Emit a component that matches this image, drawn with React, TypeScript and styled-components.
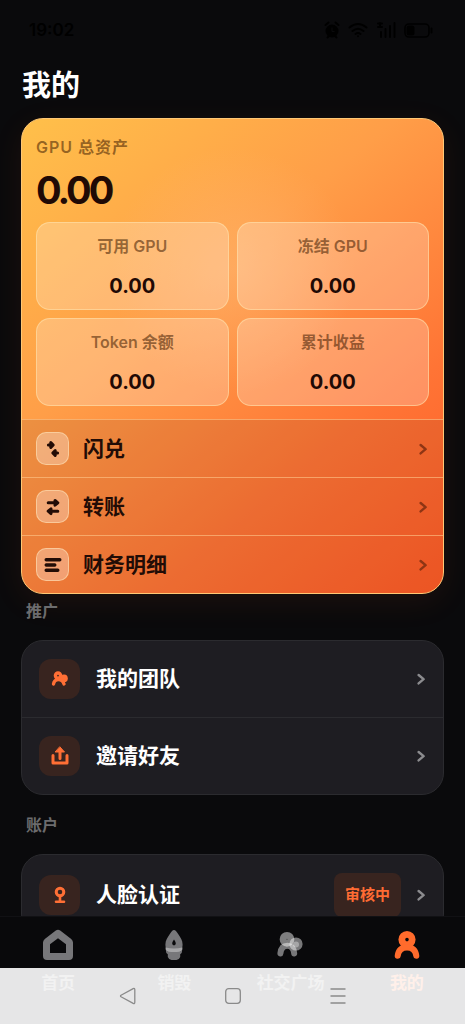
import React from "react";
import styled, { createGlobalStyle } from "styled-components";

const GlobalStyle = createGlobalStyle`
  *, *::before, *::after { box-sizing: border-box; }
  body {
    margin: 0;
    background: #0a0a0c;
    font-family: Inter, "Noto Sans CJK SC", sans-serif;
  }
  h1, h2, p, dl, dt, dd, ul { margin: 0; padding: 0; }
  ul { list-style: none; }
  a { color: inherit; text-decoration: none; }
`;

const Screen = styled.div`
  position: relative;
  display: flex;
  flex-direction: column;
  height: 100vh;
  overflow: hidden;
  color: #fff;
  background: #0a0a0c;
`;

const StatusBar = styled.div`
  display: flex;
  align-items: center;
  justify-content: space-between;
  height: 60px;
  flex: none;
  padding: 0 32px 0 29px;
  color: #000;
  font-size: 17px;
  font-weight: 600;
`;

const StatusIcons = styled.div`
  display: flex;
  align-items: center;
  gap: 8px;
`;

const Content = styled.main`
  flex: 1;
  min-height: 0;
  overflow-y: auto;
  scrollbar-width: none;
  padding: 6px 21px 24px;
`;

const PageTitle = styled.h1`
  padding: 0 1px;
  font-size: 29px;
  line-height: 40px;
  font-weight: 700;
  margin-bottom: 12px;
`;

const AssetCard = styled.section`
  border: 1px solid #ffc875;
  border-radius: 22px;
  overflow: hidden;
  color: #1f0a05;
  background:
    radial-gradient(circle at 50% 32%, rgba(255, 190, 130, 0.4), rgba(255, 170, 100, 0) 32%),
    linear-gradient(140deg, #ffc04a 0%, #ff9e48 38%, #ff7435 72%, #ff5a26 100%);
  box-shadow: 0 8px 32px rgba(255, 107, 44, 0.08);
`;

const AssetSummary = styled.div`
  padding: 17px 14px 13px;
`;

const TotalLabel = styled.h2`
  font-size: 16px;
  line-height: 22px;
  font-weight: 600;
  letter-spacing: 1px;
  color: rgba(60, 25, 0, 0.55);
`;

const TotalValue = styled.p`
  margin: 9px 0;
  font-size: 38px;
  line-height: 46px;
  font-weight: 700;
  letter-spacing: -3px;
`;

const StatGrid = styled.dl`
  display: grid;
  grid-template-columns: 1fr 1fr;
  gap: 8px;
`;

const Stat = styled.div`
  display: flex;
  flex-direction: column;
  align-items: center;
  gap: 16px;
  height: 88px;
  padding-top: 12px;
  border: 1px solid rgba(255, 225, 170, 0.6);
  border-radius: 14px;
  background: rgba(255, 255, 255, 0.23);

  dt {
    font-size: 16px;
    line-height: 22px;
    font-weight: 600;
    color: rgba(60, 25, 0, 0.55);
  }
  dd {
    font-size: 20px;
    line-height: 26px;
    font-weight: 700;
  }
`;

const ActionLink = styled.a`
  display: flex;
  align-items: center;
  gap: 14px;
  height: 58px;
  padding: 0 16px 0 14px;
  border-top: 1px solid rgba(255, 200, 140, 0.6);
  background: rgba(110, 50, 20, 0.13);
  font-size: 21px;
  line-height: 30px;
  font-weight: 700;
  color: #220c06;
`;

const ActionIcon = styled.span`
  display: grid;
  place-items: center;
  width: 33px;
  height: 33px;
  border: 1px solid rgba(255, 225, 180, 0.6);
  border-radius: 10px;
  background: rgba(255, 255, 255, 0.3);
`;

const RowText = styled.span`
  flex: 1;
`;

const SectionTitle = styled.h2<{ $spaced?: boolean }>`
  margin: ${(p) => (p.$spaced ? "18px" : "5px")} 5px 17px;
  font-size: 16px;
  line-height: 24px;
  font-weight: 600;
  color: #6c6c6e;
`;

const MenuCard = styled.ul`
  overflow: hidden;
  border: 1px solid #2b2b2f;
  border-radius: 22px;
  background: #1e1d22;

  li + li { border-top: 1px solid #2b2b2f; }
`;

const MenuLink = styled.a`
  display: flex;
  align-items: center;
  gap: 16px;
  padding: 18px 18px 18px 17px;
  font-size: 21px;
  line-height: 32px;
  font-weight: 700;
`;

const MenuIcon = styled.span`
  display: grid;
  place-items: center;
  width: 41px;
  height: 40px;
  border-radius: 12px;
  color: #ff6f35;
  background: #38241f;
`;

const Badge = styled.span`
  padding: 0 11px;
  border-radius: 8px;
  color: #ff6b33;
  background: #38241f;
  font-size: 15px;
  line-height: 44px;
  font-weight: 700;
`;

const TabBar = styled.nav`
  display: flex;
  flex: none;
  height: 108px;
  border-top: 1px solid #111114;
  background: #09090b;
`;

const Tab = styled.a<{ $active?: boolean }>`
  flex: 1;
  display: flex;
  flex-direction: column;
  align-items: center;
  gap: 10px;
  padding-top: 12px;
  font-size: 17px;
  line-height: 24px;
  font-weight: 700;
  color: ${(p) => (p.$active ? "#ff6b2c" : "#77777a")};
`;

const SystemNav = styled.div`
  position: absolute;
  left: 0;
  right: 0;
  bottom: 0;
  display: flex;
  align-items: center;
  justify-content: center;
  gap: 87px;
  height: 56px;
  background: rgba(255, 255, 255, 0.9);
`;

const SystemButton = styled.button`
  display: flex;
  padding: 0;
  border: 0;
  color: #8a8a8a;
  background: none;
`;

const Chevron = ({ color }: { color: string }) => (
  <svg width="8" height="12" viewBox="0 0 8 12" fill="none" stroke={color} strokeWidth="2.4" strokeLinecap="round" strokeLinejoin="round" aria-hidden="true">
    <path d="M1.6 2 L6.6 6.2 L1.6 10.4" />
  </svg>
);

const SwapIcon = () => (
  <svg width="18" height="18" viewBox="0 0 18 18" fill="currentColor" stroke="currentColor" strokeWidth="3" strokeLinecap="round" strokeLinejoin="round" aria-hidden="true">
    <path d="M4.4 5H7M6.8 2.6 L9.2 5 L6.8 7.4ZM13.6 13H11M11.2 10.6 L8.8 13 L11.2 15.4Z" />
  </svg>
);

const TransferIcon = () => (
  <svg width="18" height="18" viewBox="0 0 18 18" fill="currentColor" stroke="currentColor" strokeWidth="3" strokeLinecap="round" strokeLinejoin="round" aria-hidden="true">
    <path d="M4.2 4.8H12M11 2.4 L13.8 4.8 L11 7.2ZM13.8 13.2H6M7 10.8 L4.2 13.2 L7 15.6Z" />
  </svg>
);

const LinesIcon = () => (
  <svg width="18" height="18" viewBox="0 0 18 18" fill="none" stroke="currentColor" strokeWidth="3.4" strokeLinecap="round" aria-hidden="true">
    <path d="M2.2 3.8H15.8M2.2 9H10.8M2.2 14.2H13.8" />
  </svg>
);

const TeamIcon = () => (
  <svg width="18" height="18" viewBox="0 0 18 18" fill="none" stroke="currentColor" strokeLinecap="round" aria-hidden="true">
    <circle cx="7" cy="5.6" r="2.6" strokeWidth="3.4" />
    <circle cx="13" cy="8.4" r="3.8" fill="currentColor" stroke="none" />
    <path d="M2.5 14C3 10.8 5 9.6 7.5 9.6S11.8 10.6 13 14" strokeWidth="3.4" />
  </svg>
);

const ShareIcon = () => (
  <svg width="18" height="20" viewBox="0 0 18 20" fill="none" stroke="currentColor" strokeWidth="3" strokeLinecap="round" strokeLinejoin="round" aria-hidden="true">
    <path d="M2 9.5V17H16V9.5M9 12.5V3.5" />
    <path d="M9 1 L13.5 6H4.5Z" fill="currentColor" strokeWidth="1" />
  </svg>
);

const FaceIcon = () => (
  <svg width="18" height="18" viewBox="0 0 18 18" fill="none" stroke="currentColor" strokeLinecap="round" aria-hidden="true">
    <circle cx="9" cy="6" r="3.8" strokeWidth="3" />
    <path d="M9 10V15M5 15.8H13" strokeWidth="2.6" />
  </svg>
);

const HomeTabIcon = () => (
  <svg width="32" height="32" viewBox="0 0 32 32" aria-hidden="true">
    <path fill="currentColor" fillRule="evenodd" d="M13.8 1.6Q16 0 18.2 1.6L29.2 10Q31 11.5 31 13.6V27Q31 31 27 31H5Q1 31 1 27V13.6Q1 11.5 2.8 10ZM16 9.3L8 15.3V24H24V15.3Z" />
  </svg>
);

const BurnTabIcon = () => (
  <svg width="32" height="32" viewBox="0 0 32 32" aria-hidden="true">
    <path fill="currentColor" fillRule="evenodd" d="M16 1C17.4 1 18.5 2.4 20 4.8C22.5 8.4 24.6 11.5 24.6 15.5C24.6 18 24 20 22.5 22H9.5C8 20 7.4 18 7.4 15.5C7.4 11.5 9.5 8.4 12 4.8C13.5 2.4 14.6 1 16 1ZM16 10.5C14.8 12.2 14.2 13.3 14.2 14.6A1.8 1.8 0 0 0 17.8 14.6C17.8 13.3 17.2 12.2 16 10.5Z" />
    <path fill="#a5a5a7" d="M7.6 18.6Q16 20.4 24.4 18.6Q24.8 22.4 21.6 23H10.4Q7.2 22.4 7.6 18.6Z" />
    <path fill="currentColor" d="M7.8 21.5Q10 23 16 23T24.2 21.5Q24 24.8 22.2 25.3V28Q21 31 18.5 31H13.5Q11 31 9.8 28V25.3Q8 24.8 7.8 21.5Z" />
  </svg>
);

const CommunityTabIcon = () => (
  <svg width="32" height="32" viewBox="0 0 32 32" fill="none" stroke="#fff" aria-hidden="true">
    <circle cx="12" cy="10.3" r="3.9" strokeWidth="6.9" opacity="0.48" />
    <circle cx="21" cy="15" r="6.6" fill="#fff" stroke="none" opacity="0.45" />
    <circle cx="21" cy="15.6" r="3" fill="#fff" stroke="none" opacity="0.35" />
    <path d="M5.4 24.4C6 19 8.6 16.8 12.4 16.8S18.6 19 19.2 24.4" strokeWidth="6" strokeLinecap="round" opacity="0.45" />
  </svg>
);

const ProfileTabIcon = () => (
  <svg width="32" height="32" viewBox="0 0 32 32" fill="none" stroke="currentColor" aria-hidden="true">
    <circle cx="16" cy="10.6" r="5.2" strokeWidth="6.8" />
    <path d="M6.7 26.8C7.4 20.6 11 18.4 16 18.4S24.6 20.6 25.3 26.8" strokeWidth="6" strokeLinecap="round" />
  </svg>
);

const AlarmIcon = () => (
  <svg width="16" height="18" viewBox="0 0 16 18" aria-hidden="true">
    <circle cx="8" cy="10" r="6.5" fill="currentColor" />
    <path d="M1.5 4 L4.5 1.5M14.5 4 L11.5 1.5M3.5 16.5 L5 15M12.5 16.5 L11 15" stroke="currentColor" strokeWidth="2" strokeLinecap="round" />
    <path d="M8 6.5V10.5H10.5" stroke="#0a0a0c" fill="none" />
  </svg>
);

const WifiIcon = () => (
  <svg width="20" height="16" viewBox="0 0 20 16" fill="none" stroke="currentColor" strokeWidth="2" strokeLinecap="round" aria-hidden="true">
    <path d="M1.5 5.5Q10 -1.5 18.5 5.5M4.5 9Q10 4.5 15.5 9M7.5 12Q10 10 12.5 12M10 14.2V14.3" />
  </svg>
);

const SignalIcon = () => (
  <svg width="20" height="18" viewBox="0 0 20 18" fill="none" stroke="currentColor" strokeWidth="2" strokeLinecap="round" aria-hidden="true">
    <path d="M2 2.5H6M2 6H6M4 2V6M5 16V11M9.5 16V8M14 16V5M18.5 16V2" />
  </svg>
);

const BatteryIcon = () => (
  <svg width="29" height="15" viewBox="0 0 29 15" aria-hidden="true">
    <rect x="1" y="1" width="24" height="13" rx="4" fill="none" stroke="currentColor" strokeWidth="1.6" />
    <rect x="2.5" y="2.5" width="8" height="10" rx="2.5" fill="currentColor" />
    <path d="M27.5 5.5V9.5" stroke="currentColor" strokeWidth="2" strokeLinecap="round" />
  </svg>
);

const stats = [
  { label: "可用 GPU", value: "0.00" },
  { label: "冻结 GPU", value: "0.00" },
  { label: "Token 余额", value: "0.00" },
  { label: "累计收益", value: "0.00" },
];

const actions = [
  { label: "闪兑", icon: <SwapIcon /> },
  { label: "转账", icon: <TransferIcon /> },
  { label: "财务明细", icon: <LinesIcon /> },
];

const tabs = [
  { label: "首页", icon: <HomeTabIcon /> },
  { label: "销毁", icon: <BurnTabIcon /> },
  { label: "社交广场", icon: <CommunityTabIcon /> },
  { label: "我的", icon: <ProfileTabIcon />, active: true },
];

type MenuRowProps = { label: string; icon: React.ReactNode; badge?: string };

const MenuRow = ({ label, icon, badge }: MenuRowProps) => (
  <li>
    <MenuLink href="#">
      <MenuIcon>{icon}</MenuIcon>
      <RowText>{label}</RowText>
      {badge && <Badge>{badge}</Badge>}
      <Chevron color="#8b8b8e" />
    </MenuLink>
  </li>
);

export default function App() {
  return (
    <Screen>
      <GlobalStyle />
      <StatusBar>
        <span>19:02</span>
        <StatusIcons>
          <AlarmIcon />
          <WifiIcon />
          <SignalIcon />
          <BatteryIcon />
        </StatusIcons>
      </StatusBar>

      <Content>
        <PageTitle>我的</PageTitle>

        <AssetCard>
          <AssetSummary>
            <TotalLabel>GPU 总资产</TotalLabel>
            <TotalValue>0.00</TotalValue>
            <StatGrid>
              {stats.map((s) => (
                <Stat key={s.label}>
                  <dt>{s.label}</dt>
                  <dd>{s.value}</dd>
                </Stat>
              ))}
            </StatGrid>
          </AssetSummary>
          {actions.map((a) => (
            <ActionLink key={a.label} href="#">
              <ActionIcon>{a.icon}</ActionIcon>
              <RowText>{a.label}</RowText>
              <Chevron color="#8e3514" />
            </ActionLink>
          ))}
        </AssetCard>

        <SectionTitle>推广</SectionTitle>
        <MenuCard>
          <MenuRow label="我的团队" icon={<TeamIcon />} />
          <MenuRow label="邀请好友" icon={<ShareIcon />} />
        </MenuCard>

        <SectionTitle $spaced>账户</SectionTitle>
        <MenuCard>
          <MenuRow label="人脸认证" icon={<FaceIcon />} badge="审核中" />
        </MenuCard>
      </Content>

      <TabBar>
        {tabs.map((t) => (
          <Tab key={t.label} href="#" $active={t.active}>
            {t.icon}
            {t.label}
          </Tab>
        ))}
      </TabBar>

      <SystemNav>
        <SystemButton type="button" aria-label="返回">
          <svg width="18" height="18" viewBox="0 0 18 18" fill="none" stroke="currentColor" strokeWidth="1.3" strokeLinejoin="round">
            <path d="M2 8.2 L14.2 1.6Q15.8 1 15.8 2.8V15.2Q15.8 17 14.2 16.4L2 9.8Q1 9 2 8.2Z" />
          </svg>
        </SystemButton>
        <SystemButton type="button" aria-label="主屏幕">
          <svg width="18" height="18" viewBox="0 0 18 18" fill="none" stroke="currentColor" strokeWidth="1.3">
            <rect x="1.7" y="1.7" width="14.6" height="14.6" rx="3" />
          </svg>
        </SystemButton>
        <SystemButton type="button" aria-label="最近任务">
          <svg width="18" height="18" viewBox="0 0 18 18" fill="none" stroke="currentColor" strokeWidth="1.4">
            <path d="M1.5 2H16.5M1.5 9H16.5M1.5 16H16.5" />
          </svg>
        </SystemButton>
      </SystemNav>
    </Screen>
  );
}
